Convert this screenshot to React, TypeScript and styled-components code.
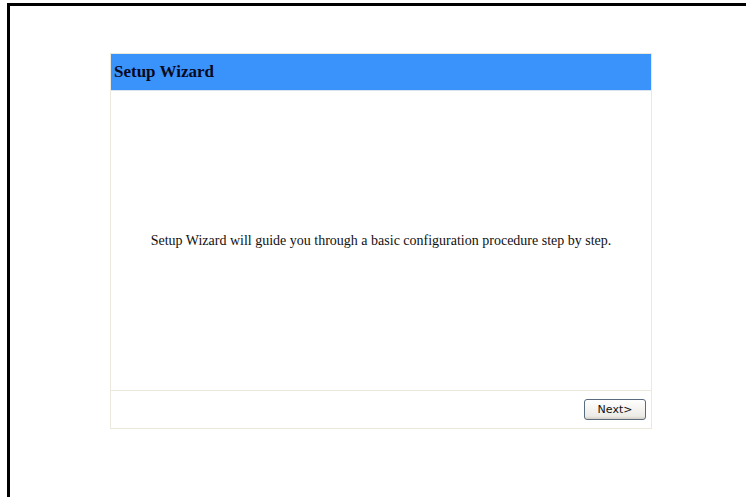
import styled, { createGlobalStyle } from "styled-components";

const GlobalStyle = createGlobalStyle`
    html, body {
        margin: 0;
        padding: 0;
        background: #ffffff;
    }
`;

// Outer page frame
const Frame = styled.div`
    position: relative;
    margin: 3px 0 0 7px;
    height: 494px;
    border-top: 3px solid #000000;
    border-left: 3px solid #000000;
    box-sizing: border-box;
    padding: 47px 0 0 100px;
`;

// Wizard panel
const Panel = styled.div`
    width: 542px;
    border: 1px solid #ebe9dc;
    background: #ffffff;
    display: flex;
    flex-direction: column;
    box-sizing: border-box;
`;

const Header = styled.div`
    height: 36px;
    background: #3a92fb;
    border-bottom: 1px solid #d8e4f0;
    display: flex;
    align-items: center;
    padding-left: 3px;
    font-family: "Liberation Serif", "Times New Roman", serif;
    font-weight: bold;
    font-size: 17px;
    color: #0a0a1e;
`;

const Body = styled.div`
    height: 299px;
    display: flex;
    align-items: center;
    justify-content: center;
    font-family: "Liberation Serif", "Times New Roman", serif;
    font-size: 14px;
    color: #111111;
`;

const Footer = styled.div`
    height: 37px;
    border-top: 1px solid #ebe9dc;
    display: flex;
    align-items: center;
    justify-content: flex-end;
    padding-right: 5px;
`;

const Button = styled.button`
    width: 62px;
    height: 21px;
    padding: 0;
    border: 1px solid #5a6b7f;
    border-radius: 3px;
    background: linear-gradient(#ffffff, #ecebe6 85%, #d6d0c5);
    font-family: "DejaVu Sans", Tahoma, sans-serif;
    font-size: 11px;
    color: #111111;
`;

export default function App() {
    return (
        <>
            <GlobalStyle />
            <Frame>
                <Panel>
                    <Header>Setup Wizard</Header>
                    <Body>
                        Setup Wizard will guide you through a basic configuration procedure step by step.
                    </Body>
                    <Footer>
                        <Button>Next&gt;</Button>
                    </Footer>
                </Panel>
            </Frame>
        </>
    );
}
